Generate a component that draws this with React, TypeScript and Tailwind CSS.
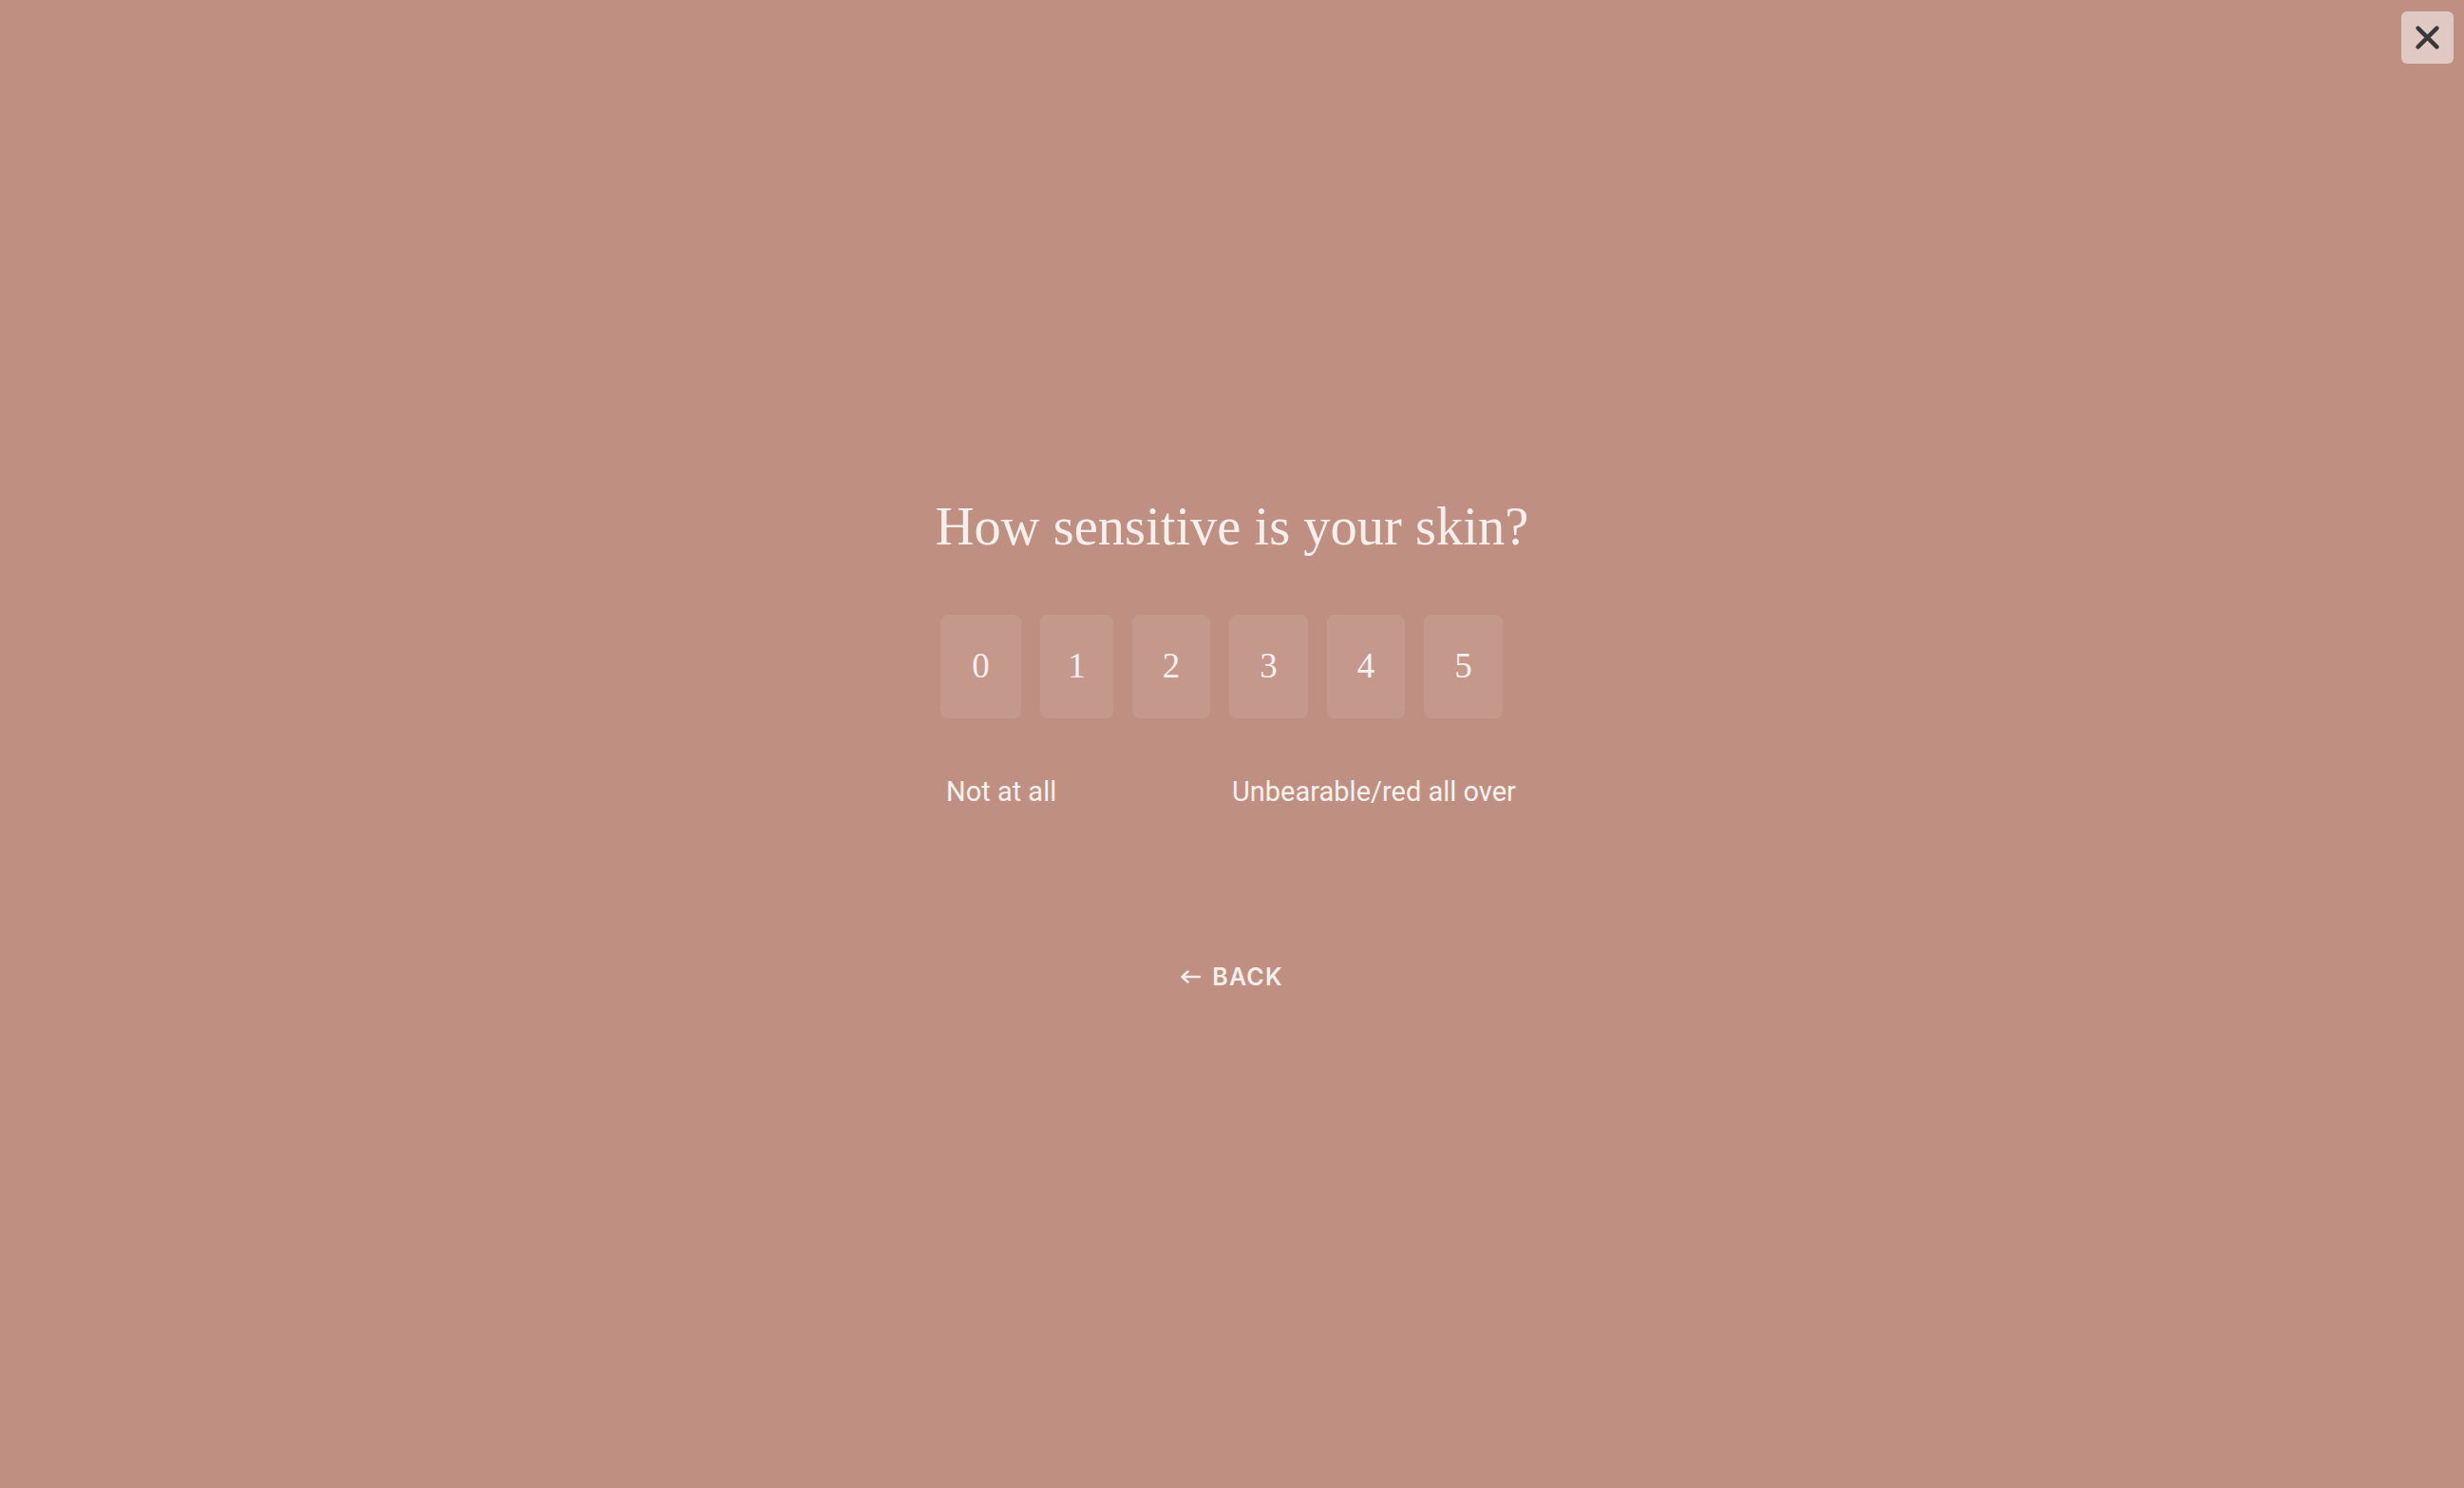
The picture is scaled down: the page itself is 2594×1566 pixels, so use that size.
import { useState } from 'react'

const options = [
  { value: 0, width: 'w-[85px]' },
  { value: 1, width: 'w-[77px]' },
  { value: 2, width: 'w-[82px]' },
  { value: 3, width: 'w-[83px]' },
  { value: 4, width: 'w-[82px]' },
  { value: 5, width: 'w-[83px]' },
]

function CloseIcon() {
  return (
    <svg width="25" height="25" viewBox="0 0 24 24" fill="none">
      <path d="M2.5 2.5 L21.5 21.5 M21.5 2.5 L2.5 21.5" stroke="#383838" strokeWidth="4.2" strokeLinecap="round" />
    </svg>
  )
}

function BackArrow() {
  return (
    <svg width="21" height="14" viewBox="0 0 21 14" fill="none">
      <path
        d="M20 7 H1.5 M7.5 1.5 L1.5 7 L7.5 12.5"
        stroke="#f6eeeb"
        strokeWidth="2.4"
        strokeLinecap="round"
        strokeLinejoin="round"
      />
    </svg>
  )
}

export default function App() {
  const [selected, setSelected] = useState<number | null>(null)

  return (
    <div className="relative flex h-screen w-full flex-col items-center bg-[#bf9081] pt-[526px]">
      <button
        type="button"
        aria-label="Close"
        className="absolute right-[11px] top-[12px] flex h-[55px] w-[55px] items-center justify-center rounded-md bg-[#e0c9c3]"
      >
        <CloseIcon />
      </button>

      <h1 className="font-['Liberation_Serif',serif] text-[56.5px] leading-none text-[#f7efec]">
        How sensitive is your skin?
      </h1>

      <div className="mr-[8px] mt-[64px] flex w-[606px] flex-col">
        <div className="flex gap-[20px]">
          {options.map((o) => (
            <button
              key={o.value}
              type="button"
              onClick={() => setSelected(o.value)}
              className={`${o.width} flex h-[109px] items-center justify-center rounded-lg font-['Liberation_Serif',serif] text-[37px] text-[#f7efec] ${
                selected === o.value ? 'bg-[#cba397]' : 'bg-[#c4998c]'
              }`}
            >
              {o.value}
            </button>
          ))}
        </div>

        <div className="mt-[63px] flex pl-[6px] font-['Roboto',sans-serif] text-[29px] leading-none text-[#f8f1ee]">
          <span className="w-[301px]">Not at all</span>
          <span>Unbearable/red all over</span>
        </div>
      </div>

      <button
        type="button"
        className="mt-[168px] flex items-center gap-[12px] font-['Inter',sans-serif] text-[25px] font-semibold leading-none tracking-[0.05em] text-[#f6eeeb]"
      >
        <BackArrow />
        BACK
      </button>
    </div>
  )
}
